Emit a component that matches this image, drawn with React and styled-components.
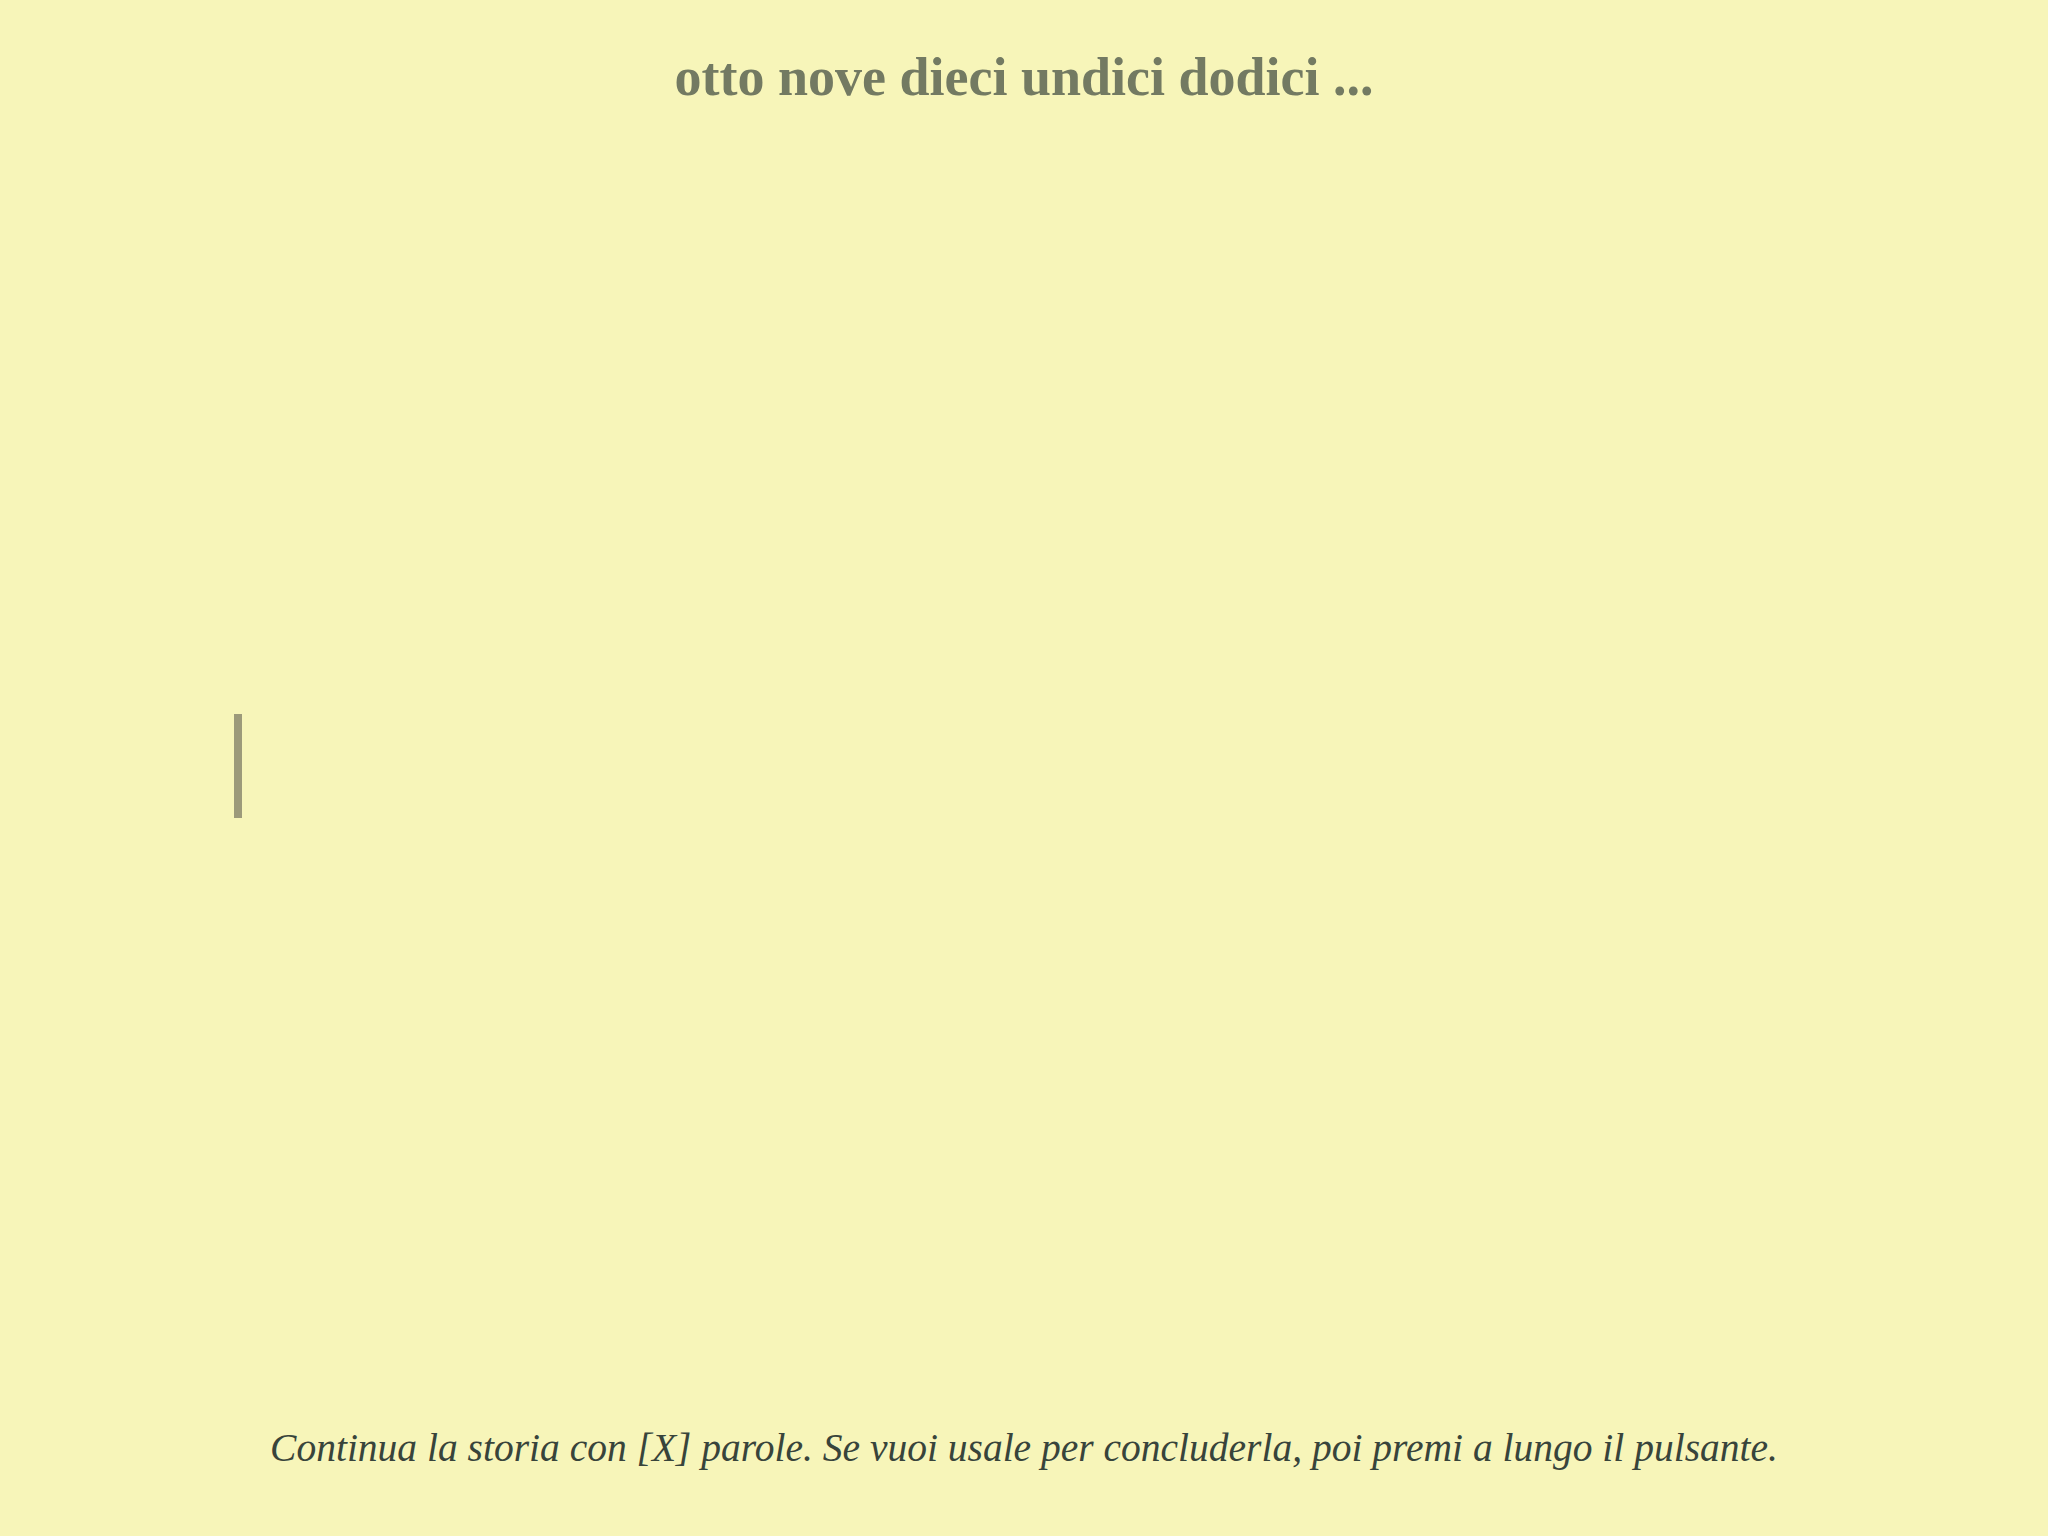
import React from "react";
import styled, { createGlobalStyle } from "styled-components";

const GlobalStyle = createGlobalStyle`
  html, body {
    margin: 0;
    padding: 0;
    background: #f7f5b9;
  }
`;

const Page = styled.div`
  height: 1536px;
  display: flex;
  flex-direction: column;
  background: #f7f5b9;
  font-family: "Liberation Serif", serif;
`;

const Title = styled.h1`
  margin: 0;
  padding-top: 47px;
  text-align: center;
  font-size: 54px;
  line-height: 60px;
  font-weight: 700;
  color: #737a62;
`;

const Editor = styled.div`
  flex: 1;
  display: flex;
  align-items: center;
  padding-left: 234px;
`;

const Caret = styled.div`
  width: 8px;
  height: 104px;
  background: #9c9a7a;
`;

const Hint = styled.p`
  margin: 0;
  padding-bottom: 65px;
  text-align: center;
  font-size: 39.5px;
  line-height: 46px;
  font-style: italic;
  color: #38443b;
`;

export default function App() {
  return (
    <>
      <GlobalStyle />
      <Page>
        <Title>otto nove dieci undici dodici ...</Title>
        <Editor>
          <Caret />
        </Editor>
        <Hint>
          Continua la storia con [X] parole. Se vuoi usale per concluderla, poi premi a lungo il pulsante.
        </Hint>
      </Page>
    </>
  );
}
